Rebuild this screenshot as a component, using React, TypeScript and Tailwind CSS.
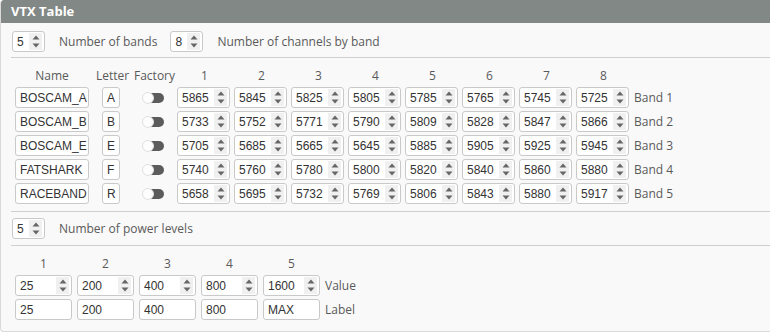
const bands = [
  { name: 'BOSCAM_A', letter: 'A', freqs: [5865, 5845, 5825, 5805, 5785, 5765, 5745, 5725] },
  { name: 'BOSCAM_B', letter: 'B', freqs: [5733, 5752, 5771, 5790, 5809, 5828, 5847, 5866] },
  { name: 'BOSCAM_E', letter: 'E', freqs: [5705, 5685, 5665, 5645, 5885, 5905, 5925, 5945] },
  { name: 'FATSHARK', letter: 'F', freqs: [5740, 5760, 5780, 5800, 5820, 5840, 5860, 5880] },
  { name: 'RACEBAND', letter: 'R', freqs: [5658, 5695, 5732, 5769, 5806, 5843, 5880, 5917] },
];

const powerValues = [25, 200, 400, 800, 1600];
const powerLabels = ['25', '200', '400', '800', 'MAX'];

const Spin = () => (
  <div className="flex h-full w-[13px] items-center justify-center bg-[#f0f0f0]">
    <svg width="8" height="15" viewBox="0 0 8 15">
      <path d="M4 1.5 L7.5 5.5 L0.5 5.5 Z" fill="#666" />
      <path d="M4 13.5 L7.5 9.5 L0.5 9.5 Z" fill="#666" />
    </svg>
  </div>
);

const NumBox = ({ value, className }: { value: string | number; className: string }) => (
  <div
    className={`flex h-[21px] items-center justify-between rounded-[3px] border border-[#c9c9c9] bg-white pl-[4px] pr-[2px] font-['Liberation_Sans',Arial,sans-serif] text-[12px] text-[#333] ${className}`}
  >
    <span>{value}</span>
    <div className="h-[17px]">
      <Spin />
    </div>
  </div>
);

const TextBox = ({ value, className }: { value: string; className: string }) => (
  <div
    className={`flex h-[21px] items-center rounded-[3px] border border-[#c9c9c9] bg-white pl-[4px] font-['Liberation_Sans',Arial,sans-serif] text-[12px] text-[#333] ${className}`}
  >
    {value}
  </div>
);

const Toggle = () => (
  <div className="relative h-[10px] w-[21px] rounded-full bg-[#5c5c5c]">
    <div className="absolute left-[-1px] top-[-1px] h-[12px] w-[12px] rounded-full border border-[#e2e2e2] bg-[#fdfdfd]" />
  </div>
);

const Sep = () => <div className="ml-[10px] h-px bg-[#cfcfcf]" />;

export default function App() {
  return (
    <div className="h-[333px] w-[770px] overflow-hidden bg-white font-['Open_Sans',sans-serif] text-[12px] text-[#5a5a5a]">
      <div className="w-[790px] overflow-hidden rounded-[4px] border border-t-0 border-[#dadada] bg-[#f9f9f9]">
        <div className="flex h-[23px] items-center bg-[#828885] pl-[10px] text-[13px] font-bold text-white">
          VTX Table
        </div>

        <div className="flex h-[34px] items-center pl-[11px] pt-[8px] pb-[5px]">
          <NumBox value={5} className="w-[33px]" />
          <span className="ml-[14px]">Number of bands</span>
          <NumBox value={8} className="ml-[13px] w-[33px]" />
          <span className="ml-[14px]">Number of channels by band</span>
        </div>
        <Sep />

        <div className="pl-[14px] pt-[8px]">
          <div className="flex h-[20px] items-center">
            <div className="w-[74px] text-center">Name</div>
            <div className="ml-[7px] w-[31px] text-center">Letter</div>
            <div className="ml-[7px] w-[40px] text-center">Factory</div>
            {[1, 2, 3, 4, 5, 6, 7, 8].map((n) => (
              <div key={n} className="ml-[4px] w-[53px] text-center">
                {n}
              </div>
            ))}
          </div>
          <div className="mt-[1px] flex flex-col gap-[3px]">
            {bands.map((b, i) => (
              <div key={b.name} className="flex h-[21px] items-center">
                <TextBox value={b.name} className="w-[74px]" />
                <TextBox value={b.letter} className="ml-[13px] w-[18px]" />
                <div className="ml-[13px] flex w-[40px] justify-center">
                  <Toggle />
                </div>
                {b.freqs.map((f, j) => (
                  <NumBox key={j} value={f} className="ml-[4px] w-[53px]" />
                ))}
                <span className="ml-[5px]">Band {i + 1}</span>
              </div>
            ))}
          </div>
        </div>

        <div className="mt-[7px]">
          <Sep />
        </div>

        <div className="flex h-[33px] items-center pl-[11px]">
          <NumBox value={5} className="w-[33px]" />
          <span className="ml-[14px]">Number of power levels</span>
        </div>
        <Sep />

        <div className="pl-[14px] pt-[8px] pb-[11px]">
          <div className="flex h-[20px] items-center">
            {[1, 2, 3, 4, 5].map((n, i) => (
              <div key={n} className={`w-[57px] text-center ${i ? 'ml-[5px]' : ''}`}>
                {n}
              </div>
            ))}
          </div>
          <div className="mt-[1px] flex h-[21px] items-center">
            {powerValues.map((v, i) => (
              <NumBox key={i} value={v} className={`w-[57px] ${i ? 'ml-[5px]' : ''}`} />
            ))}
            <span className="ml-[5px]">Value</span>
          </div>
          <div className="mt-[3px] flex h-[21px] items-center">
            {powerLabels.map((v, i) => (
              <TextBox key={i} value={v} className={`w-[57px] ${i ? 'ml-[5px]' : ''}`} />
            ))}
            <span className="ml-[5px]">Label</span>
          </div>
        </div>
      </div>
    </div>
  );
}
